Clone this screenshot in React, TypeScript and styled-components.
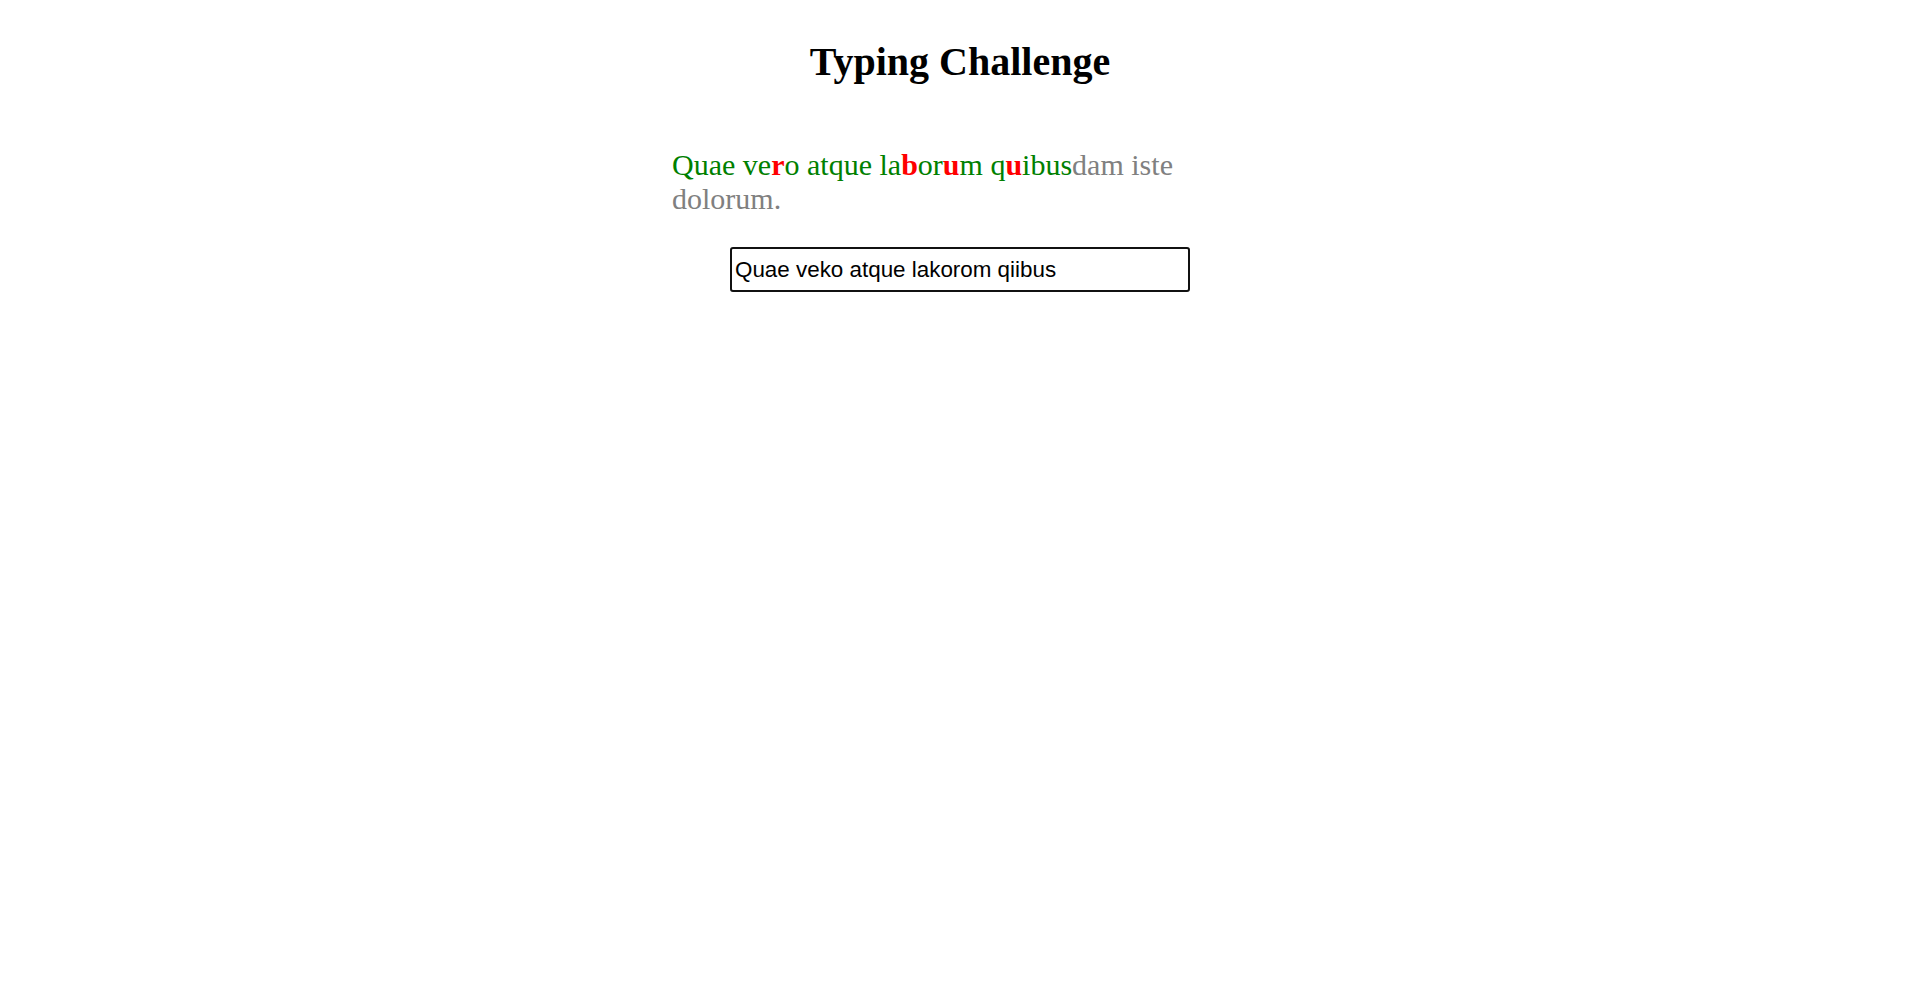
import React from "react";
import styled, { createGlobalStyle } from "styled-components";

const Global = createGlobalStyle`
  html, body { margin: 0; padding: 0; background: #fff; }
  body { font-family: "Liberation Serif", "Times New Roman", serif; }
`;

const Page = styled.main`
  display: flex;
  flex-direction: column;
  align-items: center;
`;

const Title = styled.h1`
  margin: 39px 0 0;
  font-size: 40px;
  line-height: 46px;
  font-weight: 700;
  color: #000;
`;

const Passage = styled.p`
  width: 576px;
  margin: 63px 0 0;
  font-size: 30px;
  line-height: 34px;
  text-align: left;
`;

const Char = styled.span<{ $state: "ok" | "bad" | "todo" }>`
  color: ${(p) => (p.$state === "ok" ? "#008000" : p.$state === "bad" ? "#ff0000" : "#808080")};
  font-weight: ${(p) => (p.$state === "bad" ? 700 : 400)};
`;

const Field = styled.input`
  box-sizing: border-box;
  width: 460px;
  height: 45px;
  margin-top: 31px;
  padding: 0 3px;
  border: 2px solid #111;
  border-radius: 3px;
  outline: none;
  font-family: "Liberation Sans", Arial, sans-serif;
  font-size: 22.4px;
  color: #000;
  background: #fff;
`;

const target = "Quae vero atque laborum quibusdam iste dolorum.";
const typed = "Quae veko atque lakorom qiibus";

export default function App() {
  return (
    <>
      <Global />
      <Page>
        <Title>Typing Challenge</Title>
        <Passage>
          {target.split("").map((c, i) => {
            const state = i >= typed.length ? "todo" : typed[i] === c ? "ok" : "bad";
            return (
              <Char key={i} $state={state}>
                {c}
              </Char>
            );
          })}
        </Passage>
        <Field defaultValue={typed} spellCheck />
      </Page>
    </>
  );
}
